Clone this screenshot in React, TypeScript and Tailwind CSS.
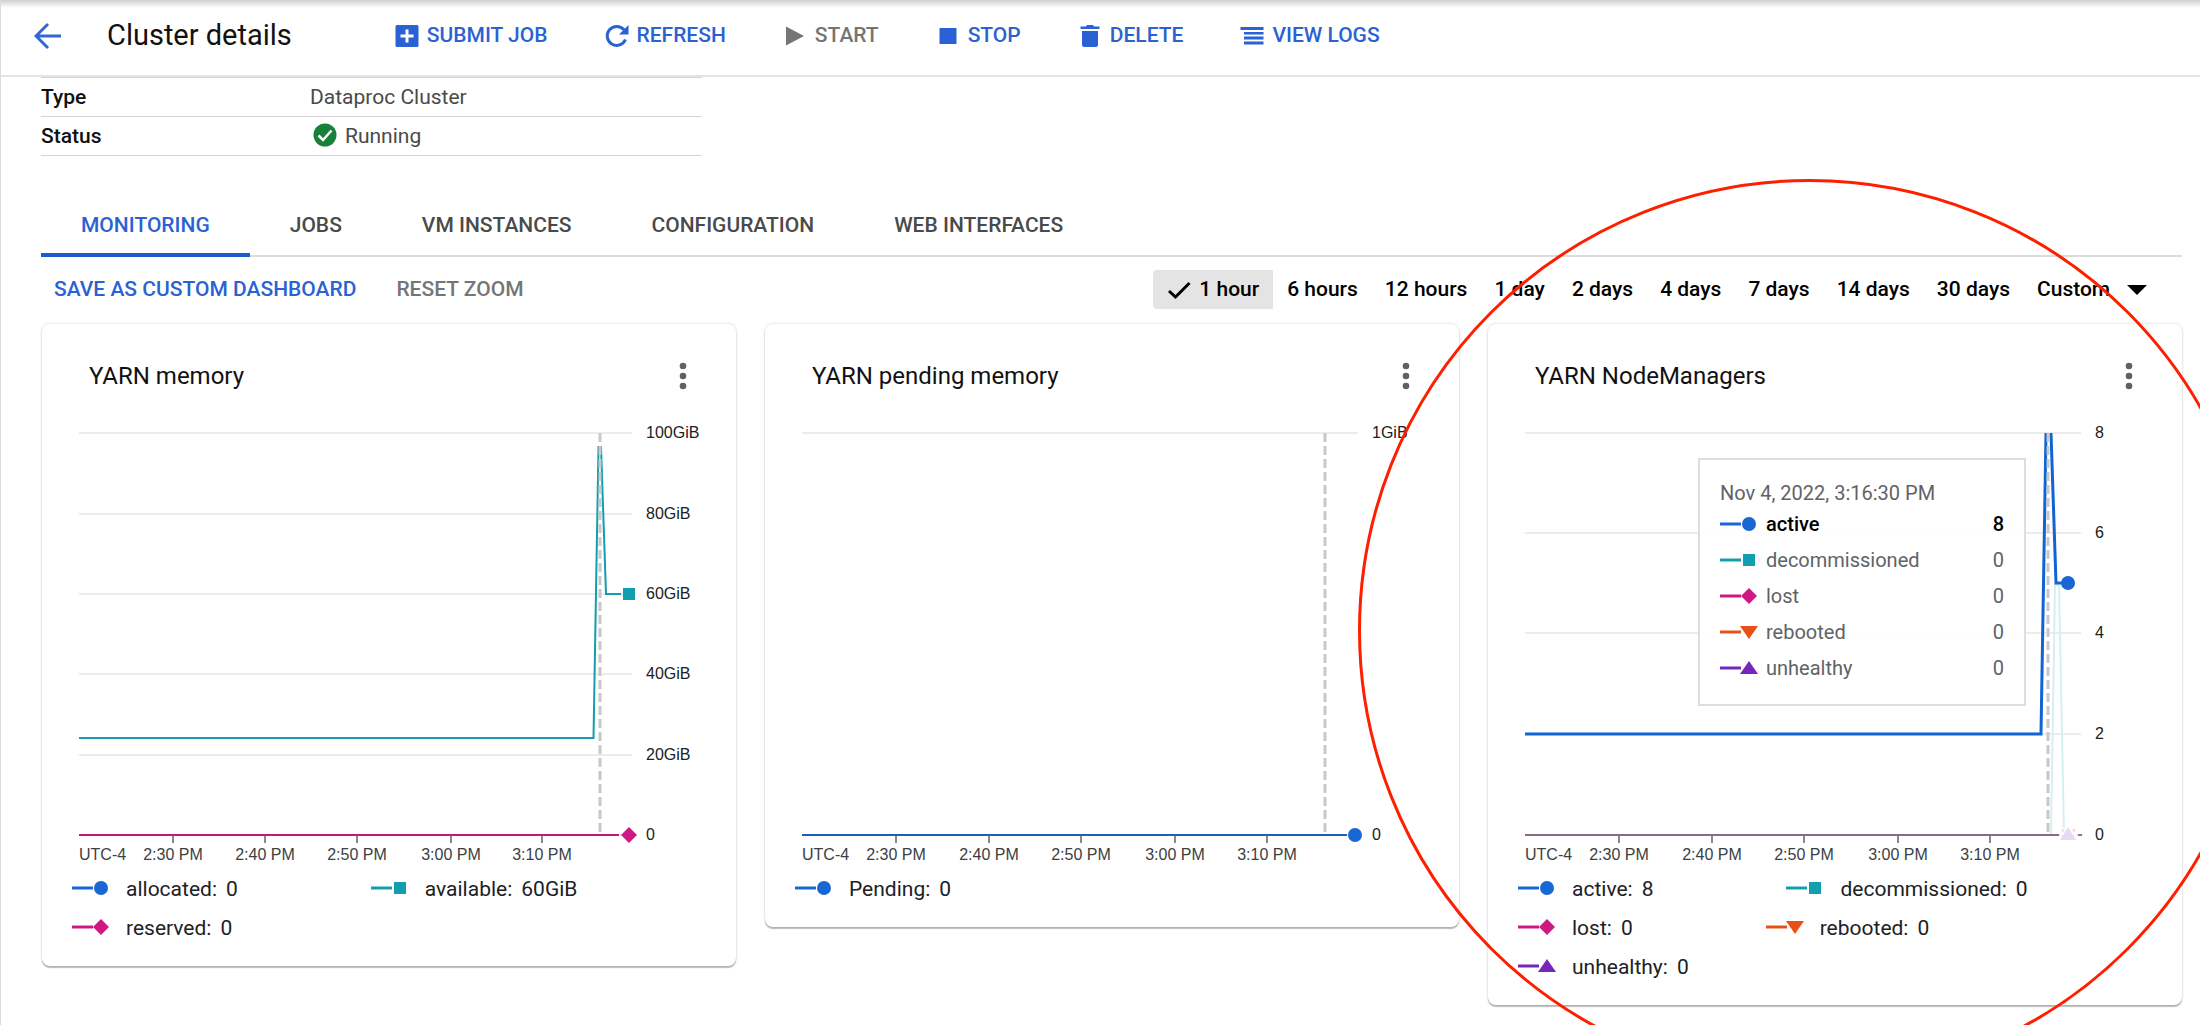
import type { ReactNode } from "react";

type Shape = "circle" | "square" | "diamond" | "down" | "up";

type Series = { name: string; value: string; shape: Shape };

const COLORS: Record<Shape, string> = {
  circle: "#1967d2",
  square: "#129eaf",
  diamond: "#d01884",
  down: "#e8501a",
  up: "#7627bb",
};

const TABS = ["MONITORING", "JOBS", "VM INSTANCES", "CONFIGURATION", "WEB INTERFACES"];

const RANGES = ["6 hours", "12 hours", "1 day", "2 days", "4 days", "7 days", "14 days", "30 days"];

const TIMES = ["2:30 PM", "2:40 PM", "2:50 PM", "3:00 PM", "3:10 PM"];

const MEMORY: Series[] = [
  { name: "allocated", value: "0", shape: "circle" },
  { name: "available", value: "60GiB", shape: "square" },
  { name: "reserved", value: "0", shape: "diamond" },
];

const PENDING: Series[] = [{ name: "Pending", value: "0", shape: "circle" }];

const NODES: Series[] = [
  { name: "active", value: "8", shape: "circle" },
  { name: "decommissioned", value: "0", shape: "square" },
  { name: "lost", value: "0", shape: "diamond" },
  { name: "rebooted", value: "0", shape: "down" },
  { name: "unhealthy", value: "0", shape: "up" },
];

function Marker({ shape, x, y }: { shape: Shape; x: number; y: number }) {
  const fill = COLORS[shape];
  const at = `translate(${x} ${y})`;
  if (shape === "circle") return <circle transform={at} r="7" fill={fill} />;
  if (shape === "square") return <rect transform={at} x="-6" y="-6" width="12" height="12" fill={fill} />;
  if (shape === "diamond") return <path transform={at} d="M0-8 8 0 0 8-8 0Z" fill={fill} />;
  if (shape === "down") return <path transform={at} d="M-9-6H9L0 7Z" fill={fill} />;
  return <path transform={at} d="M-9 6H9L0-7Z" fill={fill} />;
}

function SeriesKey({ shape, className }: { shape: Shape; className?: string }) {
  return (
    <svg width="38" height="16" viewBox="0 0 38 16" className={className} aria-hidden="true">
      <path d="M0 8H21" stroke={COLORS[shape]} strokeWidth="3" />
      <Marker shape={shape} x={29} y={8} />
    </svg>
  );
}

function Action({ label, disabled, children }: { label: string; disabled?: boolean; children: ReactNode }) {
  return (
    <button
      type="button"
      disabled={disabled}
      className="flex items-center gap-2 text-[21px] font-medium whitespace-nowrap text-[#2a62d4] disabled:text-[#757575]"
    >
      <svg width="24" height="24" viewBox="0 0 24 24" fill="currentColor" aria-hidden="true">
        {children}
      </svg>
      {label}
    </button>
  );
}

type ChartProps = {
  right: number;
  grid: [number, string][];
  ticks: number[];
  cursor: number;
  children: ReactNode;
};

function Chart({ right, grid, ticks, cursor, children }: ChartProps) {
  const base = grid[grid.length - 1][0];
  return (
    <svg viewBox="0 0 694 450" className="block w-full font-['Liberation_Sans',Arial,sans-serif] text-base">
      {grid.map(([y, label]) => (
        <g key={label}>
          <path d={`M37 ${y}H${right}`} stroke="#ececec" strokeWidth="2" />
          <text x={right + 14} y={y + 5} fill="#202124">{label}</text>
        </g>
      ))}
      <text x="37" y="440" fill="#3c4043">UTC-4</text>
      {TIMES.map((time, i) => (
        <g key={time}>
          <path d={`M${ticks[i]} ${base}v8`} stroke="#8a8a8a" strokeWidth="2" />
          <text x={ticks[i]} y="440" textAnchor="middle" fill="#3c4043">{time}</text>
        </g>
      ))}
      {children}
      <path d={`M${cursor} 13V${base}`} stroke="#c8c8c8" strokeWidth="3" strokeDasharray="9 4" />
    </svg>
  );
}

function Card({ title, series, children }: { title: string; series: Series[]; children: ReactNode }) {
  return (
    <section className="relative rounded-lg bg-white pb-[18px] shadow-[0_2px_1px_rgba(0,0,0,0.25),0_0_3px_rgba(0,0,0,0.18)]">
      <div className="flex items-center justify-between pt-[34px] pb-[26px] pl-[47px] pr-[41px]">
        <h2 className="text-2xl leading-9 text-[#111]">{title}</h2>
        <button type="button" aria-label={`${title} options`} className="flex w-6 justify-center">
          <svg width="8" height="28" viewBox="0 0 8 28" fill="#616161" aria-hidden="true">
            <circle cx="4" cy="4" r="3.300" />
            <circle cx="4" cy="14" r="3.300" />
            <circle cx="4" cy="24" r="3.300" />
          </svg>
        </button>
      </div>
      {children}
      <ul className="flex flex-wrap gap-x-[133px] pl-[30px] pr-6">
        {series.map((s) => (
          <li key={s.name} className="flex h-[39px] items-center text-[21px] text-[#202124]">
            <SeriesKey shape={s.shape} className="mr-4 mb-1" />
            {s.name}:<span className="ml-[9px]">{s.value}</span>
          </li>
        ))}
      </ul>
    </section>
  );
}

function Tooltip() {
  return (
    <div className="absolute top-[134px] right-[156px] w-[328px] border-2 border-[#dedede] bg-white/95 px-5 pt-5 pb-[18px] text-xl text-[#5f6368]">
      <p className="leading-[26px]">Nov 4, 2022, 3:16:30 PM</p>
      <ul>
        {NODES.map((s, i) => (
          <li key={s.name} className={i === 0 ? "flex h-9 items-center font-medium text-black" : "flex h-9 items-center"}>
            <SeriesKey shape={s.shape} className="mr-2" />
            <span className="grow">{s.name}</span>
            <span>{s.value}</span>
          </li>
        ))}
      </ul>
    </div>
  );
}

export default function App() {
  return (
    <div className="relative min-h-screen overflow-hidden border-l border-[#dcdcdc] bg-white font-[Roboto,sans-serif]">
      <header className="flex h-[77px] items-center border-b-2 border-[#e4e4e4] bg-[linear-gradient(#cfcfcf,#fff_8px)] pb-1 pl-[33px]">
        <a href="#clusters" aria-label="Back" className="mr-[45px]">
          <svg width="28" height="28" viewBox="0 0 28 28" fill="none" stroke="#3367d6" strokeWidth="3" aria-hidden="true">
            <path d="M27 14H3M14 2 2 14 14 26" />
          </svg>
        </a>
        <h1 className="mr-[103px] text-[29px] whitespace-nowrap text-[#111]">Cluster details</h1>
        <div className="flex gap-[57px]">
          <Action label="SUBMIT JOB">
            <path fillRule="evenodd" d="M2 1H22Q23.500 1 23.500 2.500V21.500Q23.500 23 22 23H2Q.5 23 .5 21.500V2.500Q.5 1 2 1ZM10.500 5.500V10.500H5.500V13.500H10.500V18.500H13.500V13.500H18.500V10.500H13.500V5.500Z" />
          </Action>
          <Action label="REFRESH">
            <path d="M20.500 15.500A9.500 9.500 0 1 1 19 5.800" fill="none" stroke="currentColor" strokeWidth="3" />
            <path d="M23.500 1V10.500H14Z" />
          </Action>
          <Action label="START" disabled>
            <path d="M3 2.500 21 12 3 21.500Z" />
          </Action>
          <Action label="STOP">
            <path d="M3.500 4H20.500V20H3.500Z" />
          </Action>
          <Action label="DELETE">
            <path d="M4 7H20V20.500Q20 23 17.500 23H6.500Q4 23 4 20.500ZM2.500 2.500H8L9 1H15L16 2.500H21.500V5H2.500Z" />
          </Action>
          <Action label="VIEW LOGS">
            <path d="M.5 3H23.500V6H.5ZM4 8H23.500V10.500H4ZM4 12.500H23.500V15.500H4ZM4 17.500H23.500V20.500H4Z" />
          </Action>
        </div>
      </header>

      <main className="pr-[18px] pl-10">
        <table className="w-[661px] border-t border-[#d4d4d4] text-left text-[21px]">
          <tbody>
            <tr className="h-[39px] border-b border-[#d4d4d4]">
              <th scope="row" className="w-[269px] p-0 pt-0.5 font-medium text-[#111]">Type</th>
              <td className="p-0 pt-0.5 text-[#4a4a4a]">Dataproc Cluster</td>
            </tr>
            <tr className="h-[39px] border-b border-[#d4d4d4]">
              <th scope="row" className="p-0 pt-0.5 font-medium text-[#111]">Status</th>
              <td className="p-0 pt-0.5 text-[#4a4a4a]">
                <span className="flex items-center gap-2 pl-[3px]">
                  <svg width="24" height="24" viewBox="0 0 24 24" className="mb-1" aria-hidden="true">
                    <circle cx="12" cy="12" r="11.500" fill="#188038" />
                    <path d="M5.500 12.500 10 17 18.500 7.500" fill="none" stroke="#fff" strokeWidth="2.500" />
                  </svg>
                  Running
                </span>
              </td>
            </tr>
          </tbody>
        </table>

        <div role="tablist" className="mt-[38px] flex border-b-2 border-[#dcdcdc]">
          {TABS.map((tab, i) => (
            <button
              key={tab}
              type="button"
              role="tab"
              aria-selected={i === 0}
              className="-mb-0.5 h-[63px] border-y-4 border-transparent px-10 text-[21px] font-medium whitespace-nowrap text-[#4a4a4a] aria-selected:border-b-[#1a5cd0] aria-selected:text-[#2a62d4]"
            >
              {tab}
            </button>
          ))}
        </div>

        <div className="flex items-center pt-[13px] pb-[15px] text-[21px] font-medium whitespace-nowrap">
          <button type="button" className="ml-[13px] text-[#2a62d4]">SAVE AS CUSTOM DASHBOARD</button>
          <button type="button" className="ml-10 text-[#757575]">RESET ZOOM</button>
          <div className="mr-[35px] ml-auto flex items-center gap-px text-black">
            <button type="button" aria-pressed="true" className="flex h-[39px] items-center gap-2 rounded-l-sm bg-[#e4e4e4] px-[14px]">
              <svg width="24" height="24" viewBox="0 0 24 24" fill="none" stroke="currentColor" strokeWidth="3" aria-hidden="true">
                <path d="M2 13 8.500 19 22.500 5" />
              </svg>
              1 hour
            </button>
            {RANGES.map((range) => (
              <button key={range} type="button" className="h-[39px] px-[13px]">
                {range}
              </button>
            ))}
            <label className="flex items-center gap-4 pl-[13px]">
              <select aria-label="Custom range" className="appearance-none bg-transparent">
                <option>Custom</option>
              </select>
              <svg width="20" height="10" viewBox="0 0 20 10" aria-hidden="true">
                <path d="M0 0H20L10 10Z" />
              </svg>
            </label>
          </div>
        </div>

        <div className="ml-px grid grid-cols-3 items-start gap-[29px]">
          <Card title="YARN memory" series={MEMORY}>
            <Chart
              right={590}
              cursor={558}
              ticks={[131, 223, 315, 409, 500]}
              grid={[[13, "100GiB"], [94, "80GiB"], [174, "60GiB"], [254, "40GiB"], [335, "20GiB"], [415, "0"]]}
            >
              <path d="M37 318H551.500L556.500 27H559L564 174H579" fill="none" stroke="#129eaf" strokeWidth="2" />
              <path d="M37 415H577" stroke="#c2187c" strokeWidth="2" />
              <Marker shape="square" x={587} y={174} />
              <Marker shape="diamond" x={587} y={415} />
            </Chart>
          </Card>

          <Card title="YARN pending memory" series={PENDING}>
            <Chart right={593} cursor={560} ticks={[131, 224, 316, 410, 502]} grid={[[13, "1GiB"], [415, "0"]]}>
              <path d="M37 415H582" stroke="#1a5fb8" strokeWidth="2" />
              <Marker shape="circle" x={590} y={415} />
            </Chart>
          </Card>

          <Card title="YARN NodeManagers" series={NODES}>
            <Chart
              right={593}
              cursor={560}
              ticks={[131, 224, 316, 410, 502]}
              grid={[[13, "8"], [113, "6"], [213, "4"], [314, "2"], [415, "0"]]}
            >
              <path d="M563 414 567 165H571L576 414" fill="none" stroke="#d8eff0" strokeWidth="2" />
              <path d="M37 415H571" stroke="#8a6a84" strokeWidth="2" />
              <path d="M590 415H594" stroke="#808080" strokeWidth="2" />
              <path d="M572 408H588V415H572Z" fill="#fff" />
              <path d="M573 409H577L575 413ZM584 409H588L586 413Z" fill="#fbdccd" />
              <path d="M572 420H588L580 407Z" fill="#e6daf4" />
              <path d="M37 314H553L558 13M563 13 568 163H574" fill="none" stroke="#1064d4" strokeWidth="3" />
              <Marker shape="circle" x={580} y={163} />
            </Chart>
            <Tooltip />
          </Card>
        </div>
      </main>

      {/* highlight around the NodeManagers chart */}
      <div className="pointer-events-none absolute top-[179px] right-[-61px] size-[903px] rounded-full border-3 border-[#ff1f00]" />
    </div>
  );
}
